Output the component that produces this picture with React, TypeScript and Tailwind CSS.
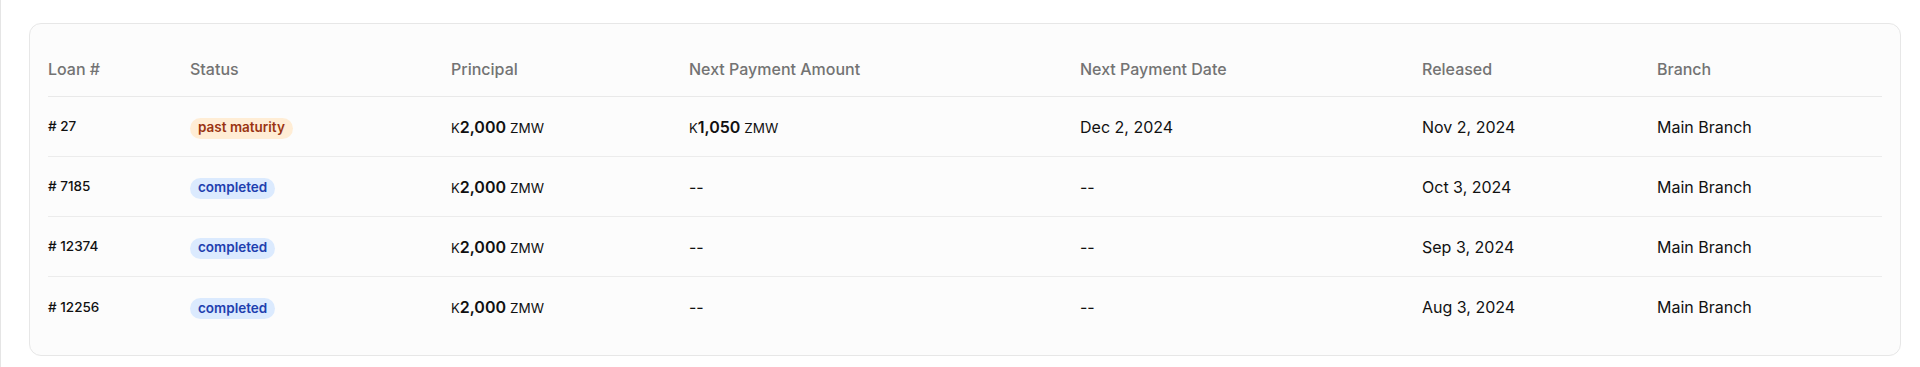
import React from 'react';

type Loan = {
    id: string;
    status: 'past maturity' | 'completed';
    principal: string;
    nextAmount: string | null;
    nextDate: string;
    released: string;
    branch: string;
};

const loans: Loan[] = [
    { id: '27', status: 'past maturity', principal: '2,000', nextAmount: '1,050', nextDate: 'Dec 2, 2024', released: 'Nov 2, 2024', branch: 'Main Branch' },
    { id: '7185', status: 'completed', principal: '2,000', nextAmount: null, nextDate: '--', released: 'Oct 3, 2024', branch: 'Main Branch' },
    { id: '12374', status: 'completed', principal: '2,000', nextAmount: null, nextDate: '--', released: 'Sep 3, 2024', branch: 'Main Branch' },
    { id: '12256', status: 'completed', principal: '2,000', nextAmount: null, nextDate: '--', released: 'Aug 3, 2024', branch: 'Main Branch' },
];

const columns = ['Loan #', 'Status', 'Principal', 'Next Payment Amount', 'Next Payment Date', 'Released', 'Branch'];

const gridCols = 'grid grid-cols-[142px_261px_238px_391px_342px_235px_1fr] items-center';

const Money: React.FC<{ value: string }> = ({ value }) => (
    <span className="flex items-baseline text-[#111111]">
        <span className="text-[13px]">K</span>
        <span className="text-[16px] font-semibold">{value}</span>
        <span className="ml-1 text-[13.5px]">ZMW</span>
    </span>
);

const StatusBadge: React.FC<{ status: Loan['status'] }> = ({ status }) => (
    <span
        className={`inline-flex items-center h-[21px] px-2 rounded-full text-[13.5px] font-semibold leading-none ${
            status === 'completed' ? 'bg-[#dbeafe] text-[#1e40af]' : 'bg-[#ffedd5] text-[#9a3412]'
        }`}
    >
        {status}
    </span>
);

export default function App() {
    return (
        <div
            className="min-h-[367px] bg-white border-l border-[#e5e5e5] pl-[28px] pr-[19px] pt-[23px]"
            style={{ fontFamily: 'Inter, "Noto Sans", sans-serif' }}
        >
            <div className="bg-[#fcfcfc] border border-[#e7e7e7] rounded-xl p-[18px]">
                <div className={`${gridCols} h-[55px] border-b border-[#e9e9e9]`}>
                    {columns.map(col => (
                        <div key={col} className="text-[16px] font-medium text-[#737373]">{col}</div>
                    ))}
                </div>
                {loans.map((loan, i) => (
                    <div
                        key={loan.id}
                        className={`${gridCols} h-[60px] ${i < loans.length - 1 ? 'border-b border-[#ececec]' : ''}`}
                    >
                        <div className="text-[13.5px] font-medium text-[#111111]"># {loan.id}</div>
                        <div><StatusBadge status={loan.status} /></div>
                        <div><Money value={loan.principal} /></div>
                        <div className="text-[16px] text-[#111111]">
                            {loan.nextAmount ? <Money value={loan.nextAmount} /> : '--'}
                        </div>
                        <div className="text-[16px] text-[#111111]">{loan.nextDate}</div>
                        <div className="text-[16px] text-[#111111]">{loan.released}</div>
                        <div className="text-[16px] text-[#111111]">{loan.branch}</div>
                    </div>
                ))}
            </div>
        </div>
    );
}
